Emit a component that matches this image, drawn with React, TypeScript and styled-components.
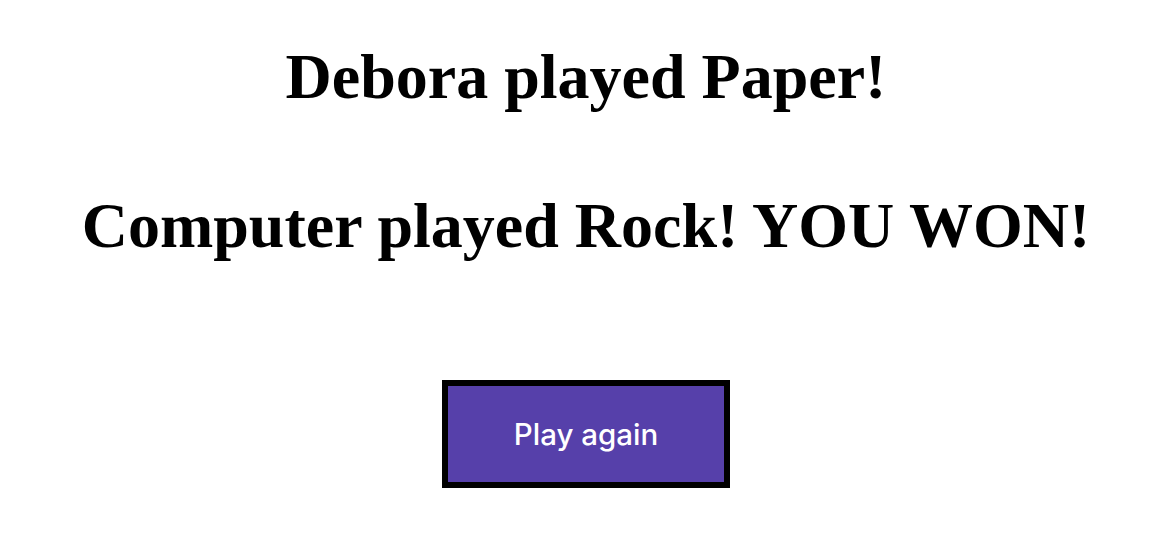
import React from "react";
import styled, { createGlobalStyle } from "styled-components";

const GlobalStyle = createGlobalStyle`
  html, body {
    margin: 0;
    padding: 0;
    background: #ffffff;
  }
  body {
    font-family: "Liberation Serif", "Times New Roman", serif;
    color: #000000;
  }
`;

const Page = styled.main`
  display: flex;
  flex-direction: column;
  align-items: center;
  padding: 0 4px 0 0;
  text-align: center;
`;

const Result = styled.h1<{ $top: number }>`
  margin: ${(p) => p.$top}px 0 0;
  font-size: 64px;
  font-weight: 700;
  line-height: 1.15;
`;

const PlayAgain = styled.button`
  margin-top: 118px;
  width: 288px;
  height: 108px;
  border: 6px solid #000000;
  background: #5640aa;
  color: #ffffff;
  font-family: Inter, "Noto Sans", sans-serif;
  font-size: 29.5px;
  font-weight: 500;
  cursor: pointer;
`;

export default function App() {
  return (
    <>
      <GlobalStyle />
      <Page>
        <Result $top={40}>Debora played Paper!</Result>
        <Result $top={75}>Computer played Rock! YOU WON!</Result>
        <PlayAgain>Play again</PlayAgain>
      </Page>
    </>
  );
}
